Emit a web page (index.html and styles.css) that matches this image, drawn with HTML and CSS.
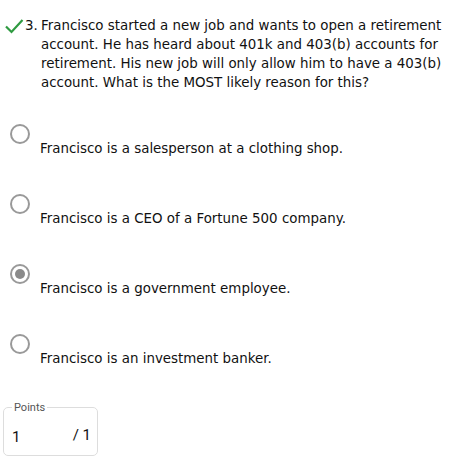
FILE: index.html
```html
<!DOCTYPE html>
<html>
<head>
<meta charset="utf-8">
<link rel="stylesheet" href="styles.css">
</head>
<body>
<div class="question">
  <svg class="check" width="20" height="16" viewBox="0 0 20 16"><path d="M2 8.5 L7.5 14 L18.5 2" fill="none" stroke="#2f9a41" stroke-width="2.2"/></svg>
  <span class="num">3.</span>
  <p class="qtext">Francisco started a new job and wants to open a retirement account. He has heard about 401k and 403(b) accounts for retirement. His new job will only allow him to have a 403(b) account. What is the MOST likely reason for this?</p>
</div>
<ul class="options">
  <li class="option"><span class="radio"></span><span class="label">Francisco is a salesperson at a clothing shop.</span></li>
  <li class="option"><span class="radio"></span><span class="label">Francisco is a CEO of a Fortune 500 company.</span></li>
  <li class="option"><span class="radio checked"></span><span class="label">Francisco is a government employee.</span></li>
  <li class="option"><span class="radio"></span><span class="label">Francisco is an investment banker.</span></li>
</ul>
<fieldset class="points">
  <legend>Points</legend>
  <div class="score"><span class="got">1</span><span class="total">/ 1</span></div>
</fieldset>
</body>
</html>
```
FILE: styles.css
```css
html, body { margin: 0; padding: 0; background: #fff; }
body { font-family: "DejaVu Sans", Verdana, sans-serif; color: #111; font-size: 13.4px; }
.question { display: flex; align-items: flex-start; padding: 16px 0 0 4px; }
.check { flex: none; margin-top: 2px; }
.num { flex: none; width: 16px; margin-left: 1px; line-height: 19px; }
.qtext { margin: 0; line-height: 19px; width: 412px; }
.options { list-style: none; margin: 0; padding: 0; }
.option { display: flex; flex-direction: column; height: 70px; }
.options .option:first-child { margin-top: 32px; }
.radio { width: 16px; height: 16px; border: 2px solid #999; border-radius: 50%; margin-left: 10px; position: relative; box-sizing: content-box; }
.radio.checked::after { content: ""; position: absolute; left: 3px; top: 3px; width: 10px; height: 10px; border-radius: 50%; background: #8a8a8a; }
.label { padding-left: 40px; margin-top: -5px; line-height: 19px; }
.points { margin: -3px 0 0 3px; width: 95px; box-sizing: border-box; border: 1px solid #ddd; border-radius: 5px; padding: 0 8px 9px 8px; font-family: Roboto, sans-serif; }
.points legend { font-size: 11px; color: #555; padding: 0 2px; }
.score { display: flex; justify-content: space-between; align-items: center; font-size: 15px; padding: 10px 0 0 0; }
.got { margin-top: 4px; }
.total { margin-right: -2px; }
```
